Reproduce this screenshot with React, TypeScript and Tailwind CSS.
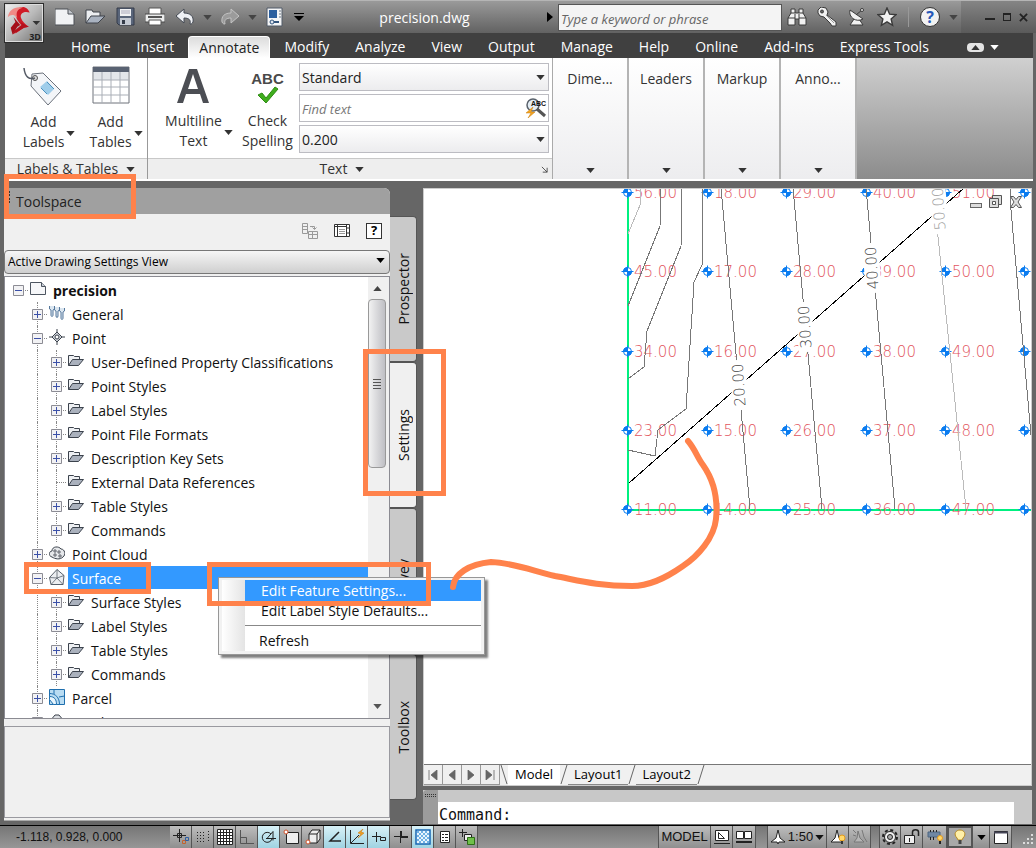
import type { ReactNode } from "react";
import clsx from "clsx";

/* ---------- shared bits ---------- */

function Caret({ className }: { className?: string }) {
  return (
    <svg viewBox="0 0 10 6" className={clsx("h-[5px] w-[9px] shrink-0 fill-current", className)} aria-hidden="true">
      <path d="M0 0h10L5 6z" />
    </svg>
  );
}

interface IconButtonProps {
  label: string;
  className?: string;
  children: ReactNode;
}

function IconButton({ label, className, children }: IconButtonProps) {
  return (
    <button type="button" aria-label={label} className={clsx("flex shrink-0 items-center justify-center", className)}>
      {children}
    </button>
  );
}

/* ---------- title bar ---------- */

const glyph = "h-5 w-5";

function NewIcon() {
  return (
    <svg viewBox="0 0 20 20" className={glyph}>
      <path d="M0 2h13l6 5v11H0z" fill="#f1f2f4" stroke="#4b4f55" />
      <path d="M13 2v5h6" fill="#c4c8ce" stroke="#4b4f55" />
    </svg>
  );
}

function OpenIcon() {
  return (
    <svg viewBox="0 0 20 20" className={glyph}>
      <path d="M1 16V3h6l1 2h7v5" fill="#eceef1" stroke="#3e434b" />
      <path d="M1 16l5-7h14l-7 7z" fill="#a9b2c0" stroke="#3e434b" />
    </svg>
  );
}

function SaveIcon() {
  return (
    <svg viewBox="0 0 20 20" className={glyph}>
      <path d="M2 1h17v17H4l-2-2z" fill="#59657a" stroke="#343b48" />
      <path d="M5 2h11v7H5z" fill="#f0f1f3" />
      <path d="M5 11h11v7H5z" fill="#c5cad3" />
      <path d="M7 13h3v4H7z" fill="#353c49" />
      <path d="M6 4h9M6 6h9" stroke="#aab" />
    </svg>
  );
}

function PrintIcon() {
  return (
    <svg viewBox="0 0 20 20" className={glyph}>
      <path d="M4 1h12v7H4z" fill="#fff" stroke="#555" />
      <path d="M0 7h20v8H0z" fill="#eceded" stroke="#4a4a4a" />
      <path d="M3 9h14v2H3z" fill="#555" />
      <path d="M4 13h12v5H4z" fill="#fff" stroke="#555" />
    </svg>
  );
}

function UndoIcon({ flip }: { flip?: boolean }) {
  return (
    <svg viewBox="0 0 20 20" className={clsx(glyph, flip && "-scale-x-100")}>
      <path
        d="M1 9l8-7v4c6 0 10 3 9 9-1 2-2 2-3 2 1-4-1-6-6-6v5z"
        fill={flip ? "#9b9b9b" : "#eef0f4"}
        stroke={flip ? "#c4c4c4" : "#454b55"}
      />
    </svg>
  );
}

function PlotIcon() {
  return (
    <svg viewBox="0 0 20 20" className={glyph}>
      <path d="M2 1h15v18H2z" fill="#f4f5f6" stroke="#515b68" />
      <path d="M4 3h8v8H4z" fill="#2b5f9e" />
      <path d="M14 4h2M14 7h2M14 10h2" stroke="#6b7683" />
      <path d="M5 15h9" stroke="#33557d" strokeWidth="2" />
      <circle cx="7" cy="15" r="2" fill="#dfe7f0" stroke="#33557d" />
    </svg>
  );
}

function BinocularsIcon() {
  return (
    <svg viewBox="0 0 20 20" className={glyph} fill="#f1f1f1" stroke="#3a3a3a">
      <path d="M4 2h4v4h4V2h4v4l3 5v7h-7v-6H8v6H1v-7l3-5z" />
      <path d="M1 11h7M12 11h7M4 6h4M12 6h4M8 7v5M12 7v5" fill="none" />
    </svg>
  );
}

function KeyIcon() {
  return (
    <svg viewBox="0 0 20 20" className={glyph} fill="#f1f1f1" stroke="#3a3a3a">
      <path d="M1 3l3-3 5 1 2 4-1 3 9 7v4h-4l-2-3-1-1-5-5-4-1-2-3z" />
      <circle cx="5" cy="4.500" r="1.500" fill="#666" />
      <path d="M9 8l8 8" stroke="#999" />
    </svg>
  );
}

function DishIcon() {
  return (
    <svg viewBox="0 0 20 20" className={glyph} fill="#f1f1f1" stroke="#3a3a3a">
      <path d="M7 12l-4 6h13l-4-6" />
      <path d="M3 3c-2 7 6 13 13 9z" />
      <path d="M9 8l6-5" />
      <circle cx="15" cy="3" r="1.500" />
    </svg>
  );
}

function StarIcon() {
  return (
    <svg viewBox="0 0 20 20" className={glyph} fill="#f1f1f1" stroke="#3a3a3a" strokeWidth="1.4">
      <path d="M10 1l2.600 6.200 6.400.5-4.900 4.200 1.500 6.400L10 14.900 4.400 18.300l1.500-6.400L1 7.700l6.400-.5z" />
    </svg>
  );
}

function TitleBar() {
  return (
    <header className="flex h-[33px] items-center border-t border-[#b5b5b5] bg-linear-to-b from-[#9a9a9a] to-[#626262] pl-[50px] text-[#2c2c2c]">
      <IconButton label="New" className="w-[30px]"><NewIcon /></IconButton>
      <IconButton label="Open" className="w-[30px]"><OpenIcon /></IconButton>
      <IconButton label="Save" className="w-[30px]"><SaveIcon /></IconButton>
      <IconButton label="Print" className="w-[30px]"><PrintIcon /></IconButton>
      <IconButton label="Undo" className="w-[30px]"><UndoIcon /></IconButton>
      <IconButton label="Undo history" className="w-[15px] text-[#444]"><Caret className="w-[6px]" /></IconButton>
      <IconButton label="Redo" className="w-[30px]"><UndoIcon flip /></IconButton>
      <IconButton label="Redo history" className="w-[15px] text-[#444]"><Caret className="w-[6px]" /></IconButton>
      <IconButton label="Plot" className="w-[30px]"><PlotIcon /></IconButton>
      <IconButton label="Customize toolbar" className="w-[18px] text-black">
        <svg viewBox="0 0 10 8" className="h-2 w-2.5"><path d="M0 0h10v1H0zM0 3h10L5 8z" /></svg>
      </IconButton>
      <h1 className="flex-1 truncate text-center text-[14px] text-white">precision.dwg</h1>
      <IconButton label="Expand search" className="w-[17px] text-black">
        <svg viewBox="0 0 6 10" className="h-2.5 w-1.5"><path d="M0 0l6 5-6 5z" /></svg>
      </IconButton>
      <input
        type="search"
        aria-label="Search help"
        placeholder="Type a keyword or phrase"
        className="h-[27px] w-56 shrink-0 border border-[#555] bg-[#f4f4f4] px-0.5 pt-1 text-[13px] italic placeholder:text-[#666]"
      />
      <IconButton label="Search" className="w-[30px]"><BinocularsIcon /></IconButton>
      <IconButton label="Subscription" className="w-[30px]"><KeyIcon /></IconButton>
      <IconButton label="Communication" className="w-[30px]"><DishIcon /></IconButton>
      <IconButton label="Favorites" className="w-[30px]"><StarIcon /></IconButton>
      <span className="mx-1.5 h-5 w-px bg-[#999]" />
      <IconButton label="Help" className="w-[30px]">
        <span className="flex h-5 w-5 items-center justify-center rounded-full border border-[#333] bg-[#f2f2f2] text-base font-bold text-[#2758b8]">?</span>
      </IconButton>
      <IconButton label="Help menu" className="w-4 text-[#444]"><Caret className="w-[6px]" /></IconButton>
      <div className="flex h-full items-center bg-linear-to-b from-[#858585] to-[#5a5a5a] pr-1 pl-5">
        <IconButton label="Minimize" className="w-[17px]"><span className="mt-1 h-0.5 w-2.5 bg-[#222]" /></IconButton>
        <IconButton label="Maximize" className="w-[17px]"><span className="h-2 w-2 border border-t-2 border-[#222]" /></IconButton>
        <IconButton label="Close" className="w-[17px]">
          <svg viewBox="0 0 10 10" className="h-[9px] w-[9px] stroke-[#222] stroke-2"><path d="M1 1l8 8M9 1l-8 8" /></svg>
        </IconButton>
      </div>
    </header>
  );
}

function AppButton() {
  return (
    <button
      type="button"
      aria-label="Application menu"
      className="absolute top-[3px] left-1 h-10 w-10 border border-[#2c2c2c] bg-linear-to-br from-[#f0f0f0] via-[#b8b8b8] to-[#6e6e6e] shadow-[inset_0_0_0_1px_#ddd]"
    >
      <svg viewBox="0 0 40 40" className="h-full w-full">
        <path d="M9 14l7 8-3 2-5 8-2-7 5-6z" fill="#a50f19" />
        <path d="M26 9c-6-2-11 1-9 6 1 3 4 6 8 9l-5 1-9 6 2-5 4-4c-5-6-7-10-5-15 2-5 11-6 14 2z" fill="#d01c27" />
        <path d="M3 14C4 6 11 2 19 4c-6 1-8 5-6 11l-3-3c-3-1-5 0-7 2z" fill="#f08a86" />
        <path d="M16 19l9 5-5 1-12 7 2-4 8-6z" fill="#b3111c" />
        <path d="M29 18h8l-4 4z" fill="#333" />
      </svg>
      <span className="absolute right-0.5 bottom-0 text-[9px] leading-[10px] font-bold text-[#222]">3D</span>
    </button>
  );
}

/* ---------- ribbon ---------- */

const RIBBON_TABS = [
  "Home", "Insert", "Annotate", "Modify", "Analyze", "View",
  "Output", "Manage", "Help", "Online", "Add-Ins", "Express Tools",
];

function RibbonTabs() {
  return (
    <nav aria-label="Ribbon" className="mr-[3px] ml-[5px] flex h-[25px] items-end gap-0.5 bg-[#404040] pl-[54px]">
      {RIBBON_TABS.map((tab) => (
        <button
          key={tab}
          type="button"
          className={clsx(
            "h-[22px] shrink-0 text-[14px] leading-[20px]",
            tab === "Annotate"
              ? "rounded-t-sm border border-b-0 border-white bg-linear-to-b from-[#dcdcdc] to-white px-2.5 text-[#222]"
              : "px-3 text-white"
          )}
        >
          {tab}
        </button>
      ))}
      <IconButton label="Minimize ribbon" className="ml-6 h-[22px]">
        <span className="flex h-[9px] w-[17px] items-center justify-center rounded-sm bg-[#e4e4e4] text-[#333]">
          <Caret className="h-1 w-1.5 rotate-180" />
        </span>
      </IconButton>
      <IconButton label="Ribbon options" className="ml-1 h-[22px] text-white"><Caret className="h-1 w-1.5" /></IconButton>
    </nav>
  );
}

interface BigButtonProps {
  icon: ReactNode;
  lines: [string, string];
  menu?: boolean;
  className?: string;
}

function BigButton({ icon, lines, menu, className }: BigButtonProps) {
  return (
    <button type="button" className={clsx("flex shrink-0 items-end justify-center pt-0.5 text-[14px] leading-5", className)}>
      <span className="flex flex-col items-center">
        <span className="flex h-[46px] w-10 items-center justify-center">{icon}</span>
        <span>{lines[0]}</span>
        <span>{lines[1]}</span>
      </span>
      {menu && <Caret className="mb-4 ml-0.5 h-1 w-1.5" />}
    </button>
  );
}

function TagIcon() {
  return (
    <svg viewBox="0 0 40 40" className="mb-1 h-10 w-10">
      <path d="M9 7l11-1 18 18-13 14L8 19z" fill="#f3f5f8" stroke="#6b717b" />
      <path d="M17 20l7-6 7 8-6 6z" fill="#9fcdea" />
      <path d="M18 21l6 6M24 15l7 7" stroke="#4a90bd" />
      <circle cx="12" cy="11" r="2.500" fill="#ddd" stroke="#555" />
      <path d="M1 1c1 9 5 12 11 10" fill="none" stroke="#555b66" strokeWidth="1.500" />
    </svg>
  );
}

function TableIcon() {
  return (
    <svg viewBox="0 0 38 38" className="mb-2 h-[38px] w-[38px]">
      <path d="M1 1h36v36H1z" fill="#fff" stroke="#6e737b" />
      <path d="M1 1h36v5H1z" fill="#596272" />
      <path d="M2 6h34v8H2z" fill="#e3e6ea" />
      <path d="M1 14h36M1 21h36M1 29h36M10 6v31M19 6v31M28 6v31" stroke="#a9aeb6" />
    </svg>
  );
}

function MultilineIcon() {
  return (
    <svg viewBox="0 0 32 36" className="mb-1 h-9 w-8">
      <path d="M0 35L12 1h8l12 34h-6l-3-9H9l-3 9zM11 21h10L16 6z" fill="#4c4e54" />
    </svg>
  );
}

function SpellingIcon() {
  return (
    <span className="flex flex-col items-center">
      <span className="[font-family:'Liberation_Sans',sans-serif] text-[15px] leading-[14px] font-bold text-[#4a4a4a]">ABC</span>
      <svg viewBox="0 0 22 18" className="h-[18px] w-[22px]">
        <path d="M1 9l4-2 4 5L18 1l3 2L9 17z" fill="#3fae1d" stroke="#2f8b14" />
      </svg>
    </span>
  );
}

function FindIcon() {
  return (
    <svg viewBox="0 0 22 20" className="h-5 w-[22px]" fill="none">
      <circle cx="8" cy="7" r="6" stroke="#59616b" strokeWidth="1.500" fill="#e4edf4" />
      <path d="M12 11l8 7" stroke="#555" strokeWidth="3" />
      <path d="M8 9l-7 6h5l-3 5 7-6H6z" fill="#f5a623" stroke="#c97c0c" strokeWidth=".5" />
      <text x="6" y="8" fontSize="7" fontWeight="700" fill="#111" fontFamily="Liberation Sans, sans-serif">ABC</text>
    </svg>
  );
}

function RibbonSelect({ label, value }: { label: string; value: string }) {
  return (
    <div className="relative">
      <select
        aria-label={label}
        defaultValue={value}
        className="h-7 w-full appearance-none border border-[#bcbcc2] bg-linear-to-b from-white to-[#ececee] px-0.5 text-[14px] text-[#222]"
      >
        <option>{value}</option>
      </select>
      <Caret className="pointer-events-none absolute top-3 right-1 text-[#333]" />
    </div>
  );
}

function PanelFooter({ title, children }: { title: string; children?: ReactNode }) {
  return (
    <div className="flex h-[21px] items-center border-t border-[#c8c8c8] bg-[#eee] text-[14px] leading-5">
      <button type="button" className="flex flex-1 items-center justify-center gap-2">
        {title}
        <Caret />
      </button>
      {children}
    </div>
  );
}

function Ribbon() {
  return (
    <section className="mr-[3px] ml-[5px] flex h-[123px] border-b-2 border-white bg-linear-to-b from-[#d0d0d0] to-[#8c8c8c] text-[#333]">
      <div className="flex w-[143px] shrink-0 flex-col border-r border-[#999] bg-white">
        <div className="flex flex-1 items-start pt-1.5 pl-1.5">
          <BigButton icon={<TagIcon />} lines={["Add", "Labels"]} menu className="w-[76px]" />
          <BigButton icon={<TableIcon />} lines={["Add", "Tables"]} menu className="w-[58px]" />
        </div>
        <PanelFooter title="Labels & Tables" />
      </div>

      <div className="flex w-[405px] shrink-0 flex-col border-r border-[#aaa] bg-white">
        <div className="flex flex-1 items-start pt-[5px]">
          <BigButton icon={<MultilineIcon />} lines={["Multiline", "Text"]} menu className="w-[92px] pl-2.5" />
          <BigButton icon={<SpellingIcon />} lines={["Check", "Spelling"]} className="w-[59px] pr-1" />
          <div className="mr-[3px] flex flex-1 flex-col gap-[3px]">
            <RibbonSelect label="Text style" value="Standard" />
            <div className="flex h-7 items-center border border-[#bcbcc2] bg-white">
              <input
                aria-label="Find text"
                placeholder="Find text"
                className="min-w-0 flex-1 px-0.5 pt-1 text-[13px] italic placeholder:text-[#777]"
              />
              <IconButton label="Find" className="w-6"><FindIcon /></IconButton>
            </div>
            <RibbonSelect label="Text height" value="0.200" />
          </div>
        </div>
        <PanelFooter title="Text">
          <IconButton label="Text settings" className="w-4">
            <svg viewBox="0 0 8 8" className="h-[7px] w-[7px] fill-none stroke-[#444]"><path d="M1 1l6 6M7 2v5H2" /></svg>
          </IconButton>
        </PanelFooter>
      </div>

      {["Dime...", "Leaders", "Markup", "Anno..."].map((panel) => (
        <button
          key={panel}
          type="button"
          className="flex w-[76px] shrink-0 flex-col items-center justify-between border-r-2 border-[#b4b4b4] bg-linear-to-b from-white to-[#ededef] pt-[11px] pb-1.5 text-[14px] leading-5"
        >
          {panel}
          <Caret />
        </button>
      ))}
    </section>
  );
}

/* ---------- toolspace ---------- */

type NodeIcon = "drawing" | "general" | "point" | "folder" | "cloud" | "surface" | "parcel" | "grading";

interface TreeRow {
  label: string;
  level: 0 | 1 | 2;
  icon: NodeIcon;
  box: "plus" | "minus" | "none";
  selected?: boolean;
}

const folder = (label: string, box: TreeRow["box"] = "plus"): TreeRow => ({ label, level: 2, icon: "folder", box });

const TREE: TreeRow[] = [
  { label: "precision", level: 0, icon: "drawing", box: "minus" },
  { label: "General", level: 1, icon: "general", box: "plus" },
  { label: "Point", level: 1, icon: "point", box: "minus" },
  folder("User-Defined Property Classifications"),
  folder("Point Styles"),
  folder("Label Styles"),
  folder("Point File Formats"),
  folder("Description Key Sets"),
  folder("External Data References", "none"),
  folder("Table Styles"),
  folder("Commands"),
  { label: "Point Cloud", level: 1, icon: "cloud", box: "plus" },
  { label: "Surface", level: 1, icon: "surface", box: "minus", selected: true },
  folder("Surface Styles"),
  folder("Label Styles"),
  folder("Table Styles"),
  folder("Commands"),
  { label: "Parcel", level: 1, icon: "parcel", box: "plus" },
  { label: "Grading", level: 1, icon: "grading", box: "plus" },
];

const NODE_ICONS: Record<NodeIcon, ReactNode> = {
  drawing: (
    <g fill="#f6f7f9" stroke="#4d5560">
      <path d="M.5 1.500h11l4 4v8h-15z" />
      <path d="M11.500 1.500v4h4" fill="#c9ced6" />
    </g>
  ),
  general: (
    <g fill="#dbe6f0" stroke="#54779b">
      <path d="M.5 1v3l1.500 1v5c0 2 2 2 2 0V5l1.500-1V1" />
      <path d="M5.500 2v3L7 6v5c0 2 2 2 2 0V6l1.500-1V2" />
      <path d="M10.500 3v3l1.500 1v6c0 2 2 2 2 0V7l1.500-1V3" />
    </g>
  ),
  point: (
    <g fill="#fff" stroke="#3c434d">
      <path d="M8 0v16M0 8h16" />
      <path d="M8 3l5 5-5 5-5-5z" fill="#cdd1d7" />
      <circle cx="8" cy="8" r="2" />
    </g>
  ),
  folder: (
    <g stroke="#3c434d">
      <path d="M.5 12.500v-10h5l1 1h5v3" fill="#eef0f3" />
      <path d="M.5 12.500l4-6h11l-5 6z" fill="#aab1bd" />
    </g>
  ),
  cloud: (
    <g fill="#e6e8eb" stroke="#3c434d">
      <path d="M3 12C-1 11 0 6 3 6c0-5 7-5 9-2 4 0 5 6 2 8-3 3-8 2-11 0z" />
      <path d="M5 5h2v2H5zM9 6h2v2H9zM5 9h2v2H5zM10 10h2v2h-2z" fill="#fff" strokeWidth=".8" />
    </g>
  ),
  surface: (
    <g fill="#eceef1" stroke="#59616b">
      <path d="M8 .5l7 6-1 9H2l-1.500-7z" />
      <path d="M8 .5V9l7-2.500M8 9l6 6.500M8 9l-6 6.500M8 9L.5 8.500" fill="none" strokeWidth=".8" />
    </g>
  ),
  parcel: (
    <g stroke="#1f6fae">
      <path d="M.5.5h15v15h-15z" fill="#b9dcf2" />
      <path d="M.5 4.500c6 0 10 4 10 11M5 .5v4.500M10 8l5.500-1" fill="none" />
      <path d="M.5 7.500c5 0 7 3 7 8h-3l-4-5z" fill="#e8f5fd" />
    </g>
  ),
  grading: <path d="M1 8l5-6h4l5 6-7 7z" fill="#dcdfe3" stroke="#3c434d" />,
};

function Expander({ box, first }: { box: TreeRow["box"]; first: boolean }) {
  return (
    <span className="relative flex w-[19px] shrink-0 items-center justify-center">
      {!first && <span className="absolute inset-y-0 left-[9px] border-l border-dotted border-[#888]" />}
      <span className="absolute top-1/2 right-0 left-[9px] border-t border-dotted border-[#888]" />
      {box !== "none" && (
        <svg viewBox="0 0 11 11" className="relative h-[11px] w-[11px]">
          <path d="M.5.500h10v10h-10z" fill="#f2f2f4" stroke="#8c8c94" />
          <path d={box === "plus" ? "M2 5.500h7M5.500 2v7" : "M2 5.500h7"} stroke="#3b50a8" />
        </svg>
      )}
    </span>
  );
}

function TreeItem({ row }: { row: TreeRow }) {
  return (
    <li className="flex h-6 shrink-0 pl-1">
      {row.level > 0 && <span className="w-[19px] shrink-0" />}
      {row.level > 1 && <span className="ml-[9px] w-2.5 shrink-0 border-l border-dotted border-[#888]" />}
      <Expander box={row.box} first={row.level === 0} />
      <svg viewBox="0 0 16 16" className="mt-[3px] ml-0.5 h-4 w-4 shrink-0">
        {NODE_ICONS[row.icon]}
      </svg>
      <span
        className={clsx(
          "ml-[3px] h-[23px] flex-1 pt-px pl-1 text-[14px] leading-[23px] whitespace-nowrap",
          row.selected && "bg-[#3399ff] text-white",
          row.level === 0 && "font-bold"
        )}
      >
        {row.label}
      </span>
    </li>
  );
}

function Scrollbar() {
  return (
    <div className="flex w-[21px] shrink-0 flex-col items-center bg-[#f0f0f0] pr-[3px]">
      <IconButton label="Scroll up" className="h-[22px] w-full text-[#444]"><Caret className="w-2 rotate-180" /></IconButton>
      <div className="flex h-[169px] w-full flex-col items-center justify-center gap-0.5 rounded-sm border border-[#999] bg-linear-to-r from-[#f2f2f2] to-[#bfbfc4]">
        <span className="h-px w-2 bg-[#555]" />
        <span className="h-px w-2 bg-[#555]" />
        <span className="h-px w-2 bg-[#555]" />
        <span className="h-px w-2 bg-[#555]" />
      </div>
      <span className="flex-1" />
      <IconButton label="Scroll down" className="h-6 w-full text-[#555]"><Caret className="w-2" /></IconButton>
    </div>
  );
}

function Toolspace() {
  return (
    <aside aria-label="Toolspace" className="flex w-[386px] shrink-0 flex-col rounded-tr-md border-b border-[#aaa] bg-[#f0f0f0]">
      <div className="flex h-[26px] items-center gap-1.5 rounded-tr-md bg-[#a0a0a0] pl-1">
        <span className="mb-2 h-3 border-l-2 border-dotted border-[#333]" />
        <h2 className="text-[14px] text-[#222]">Toolspace</h2>
      </div>

      <div className="flex h-[34px] items-center justify-end gap-4 pr-2">
        <IconButton label="Copy settings">
          <svg viewBox="0 0 16 16" className="h-4 w-4 fill-none stroke-[#999]">
            <path d="M.5.500h5v10h-5zM.5 3.500h5M.5 6.500h5M6.500 8.500h9v7h-9zM6.500 11.500h9M10.500 8.500v7M8 3.500h4.500V6M10.500 4.500l2 2 2-2" />
          </svg>
        </IconButton>
        <IconButton label="Panorama">
          <svg viewBox="0 0 16 14" className="h-3.5 w-4 fill-[#fff] stroke-[#333]">
            <path d="M.5.500h15v12H.5zM.5 2.500h12M3.500 1v12M12.500 1v12M14 3v2M14 8v2" />
            <path d="M5 5.500h6M5 7.500h6M5 9.500h6" stroke="#999" />
          </svg>
        </IconButton>
        <IconButton label="Toolspace help">
          <span className="flex h-4 w-4 items-center justify-center border border-[#333] bg-white text-[13px] font-bold">?</span>
        </IconButton>
      </div>

      <div className="relative">
        <select
          aria-label="View"
          defaultValue="Active Drawing Settings View"
          className="h-6 w-full appearance-none rounded-sm border border-[#777] bg-linear-to-b from-[#f6f6f6] to-[#cfcfcf] px-[3px] text-[12px] text-black"
        >
          <option>Active Drawing Settings View</option>
        </select>
        <Caret className="pointer-events-none absolute top-[10px] right-[5px] text-black" />
      </div>

      <div className="mt-0.5 flex h-[443px] border border-[#8b8b92] bg-white">
        <ul className="flex min-w-0 flex-1 flex-col overflow-hidden pt-px text-[#111]">
          {TREE.map((row, i) => (
            <TreeItem key={i} row={row} />
          ))}
        </ul>
        <Scrollbar />
      </div>

      <div className="mt-[7px] mb-0.5 flex-1 border border-[#9a9aa0]" />
    </aside>
  );
}

const SIDE_TABS = ["Prospector", "Settings", "Survey", "Toolbox"];

function SideTabs() {
  return (
    <div className="flex w-[27px] shrink-0 flex-col pt-7">
      {SIDE_TABS.map((tab) => (
        <button
          key={tab}
          type="button"
          className={clsx(
            "flex h-[146px] items-center justify-center rounded-r border border-l-0 border-[#555] text-[14px] text-[#111]",
            tab === "Settings" ? "bg-[#f0f0f0]" : "bg-[#c9c9c9]"
          )}
        >
          <span className="rotate-180 [writing-mode:vertical-rl]">{tab}</span>
        </button>
      ))}
    </div>
  );
}

/* ---------- drawing ---------- */

const POINT_X = [627, 707, 786, 866, 945, 1024];
const POINT_Y = [192, 271, 351, 430, 509];
const ELEVATIONS = [
  ["56.00", "18.00", "29.00", "40.00", "51.00"],
  ["45.00", "17.00", "28.00", "39.00", "50.00"],
  ["34.00", "16.00", "27.00", "38.00", "49.00"],
  ["23.00", "15.00", "26.00", "37.00", "48.00"],
  ["11.00", "14.00", "25.00", "36.00", "47.00"],
];

const CONTOURS = [
  "M661 188l-1 38-32 80",
  "M682 188l-1 58-34 85-3 36-16 12",
  "M702 188v77l-8 17-8 127-28 21-3 26-27-6",
  "M721 188L750 509",
  "M793 188L822 509",
  "M866 188L895 509",
  "M1010 188l1 22 20 225",
];

const CONTOUR_LABELS = [
  { text: "20.00", x: 739, y: 385, color: "#444" },
  { text: "30.00", x: 805, y: 327, color: "#444" },
  { text: "40.00", x: 872, y: 268, color: "#444" },
  { text: "50.00", x: 939, y: 209, color: "#999" },
];

function SurveyPoint({ x, y }: { x: number; y: number }) {
  return (
    <g transform={`translate(${x} ${y})`} stroke="#0a7cf0">
      <circle r="4" fill="#fff" />
      <path d="M0 0v-4a4 4 0 0 0-4 4zM0 0v4a4 4 0 0 0 4-4z" fill="#0a7cf0" />
      <path d="M-6 0H6M0-6V6" />
    </g>
  );
}

function DrawingCanvas() {
  return (
    <svg
      viewBox="424 189 608 576"
      className="h-[576px] w-[608px] max-w-none [font-family:'DejaVu_Sans',sans-serif] text-[15px] font-extralight"
      role="img"
      aria-label="Surface contours and survey points"
    >
      <g fill="none" stroke="#00f080" strokeWidth="2">
        <path d="M628 188v322" />
        <path d="M627 510h405" />
      </g>
      {POINT_Y.map((y, r) =>
        POINT_X.map((x, c) => (
          <g key={`${x}-${y}`}>
            <SurveyPoint x={x + 0.5} y={y + 0.5} />
            <text x={x + 7} y={y + 6} fill="#e25560">{ELEVATIONS[r][c]}</text>
          </g>
        ))
      )}
      <g fill="none" stroke="#777" shapeRendering="crispEdges">
        <path d="M640 188v17l-12 29M933 188L966 509" stroke="#bbb" />
        {CONTOURS.map((d) => (
          <path key={d} d={d} />
        ))}
        <path d="M629 483L964 188" stroke="#000" />
      </g>
      {CONTOUR_LABELS.map((l) => (
        <g key={l.text} transform={`translate(${l.x} ${l.y}) rotate(-94)`}>
          <rect x="-25" y="-8" width="50" height="16" fill="#fff" />
          <text textAnchor="middle" y="5" fill={l.color}>{l.text}</text>
        </g>
      ))}
    </svg>
  );
}

function DrawingArea() {
  return (
    <main className="relative min-h-0 flex-1 bg-white">
      <div className="absolute inset-0 overflow-hidden">
        <DrawingCanvas />
      </div>
      <div className="absolute top-1.5 right-2 flex gap-1.5">
        <IconButton label="Minimize drawing" className="h-3.5 w-3.5">
          <span className="mt-1.5 h-[5px] w-3 border border-[#666] bg-[#ddd]" />
        </IconButton>
        <IconButton label="Restore drawing" className="h-3.5 w-3.5">
          <svg viewBox="0 0 14 14" className="h-3.5 w-3.5 fill-[#ddd] stroke-[#555]">
            <path d="M3.500.500h9v9h-9z" /><path d="M.5 3.500h9v9h-9z" /><path d="M3.500 6.500h3v3h-3z" fill="#fff" />
          </svg>
        </IconButton>
        <IconButton label="Close drawing" className="h-3.5 w-3.5">
          <svg viewBox="0 0 14 14" className="h-3.5 w-3.5 fill-[#ddd] stroke-[#555]">
            <path d="M1.500 1.500h3l2.500 3 2.500-3h3L9 7l3.500 5.500h-3L7 9.500l-2.500 3h-3L5 7z" />
          </svg>
        </IconButton>
      </div>
    </main>
  );
}

const NAV_PATHS = [
  { label: "First layout", d: "M1 0v10M9 0L3 5l6 5z" },
  { label: "Previous layout", d: "M8 0L2 5l6 5z" },
  { label: "Next layout", d: "M2 0l6 5-6 5z" },
  { label: "Last layout", d: "M9 0v10M1 0l6 5-6 5z" },
];

function Slash({ flip }: { flip?: boolean }) {
  return (
    <svg viewBox="0 0 8 20" className={clsx("h-5 w-2 shrink-0 stroke-[#666]", flip && "-scale-x-100")}>
      <path d="M7 0L1 19" />
    </svg>
  );
}

function LayoutTabs() {
  return (
    <div className="flex h-[21px] items-stretch border-t border-[#777] bg-[#f0f0f0] text-[13px] text-black">
      {NAV_PATHS.map((n) => (
        <IconButton key={n.label} label={n.label} className="w-[19px] border-r border-b border-[#999]">
          <svg viewBox="0 0 10 10" className="h-2.5 w-2.5 fill-[#666] stroke-[#666]"><path d={n.d} strokeWidth=".8" /></svg>
        </IconButton>
      ))}
      <Slash flip />
      <button type="button" className="bg-white px-[7px]">Model</button>
      {["Layout1", "Layout2"].map((t) => (
        <span key={t} className="flex">
          <Slash />
          <button type="button" className="border-b border-[#888] px-1.5">{t}</button>
        </span>
      ))}
      <Slash />
    </div>
  );
}

function CommandLine() {
  return (
    <div className="mt-1 flex h-[34px] bg-[#c8c8c8]">
      <div className="w-[15px] shrink-0 rounded-tl bg-[#9c9c9c] px-0.5 pt-1">
        <svg viewBox="0 0 11 4" className="h-1 w-[11px] stroke-[#333]">
          <path d="M0 .5h11M0 2.500h11" strokeDasharray="1 1" />
        </svg>
      </div>
      <label className="mt-3 mr-[18px] flex flex-1 items-center bg-white pt-1 pl-px [font-family:'DejaVu_Sans_Mono',monospace] text-[15px] leading-4 text-[#111]">
        Command:
        <input className="min-w-0 flex-1 outline-none" />
      </label>
    </div>
  );
}

/* ---------- status bar ---------- */

const TOGGLES: { label: string; on?: boolean; icon: ReactNode }[] = [
  { label: "Infer constraints", icon: <><path d="M6.500 0v13M0 6.500h13M4.500 4.500h4v4h-4z" /><path d="M9.500 11.500h3v3h-3z" stroke="#c4622d" /><path d="M12.500 8.500h3v3h-3z" stroke="#2d5fa4" /></> },
  { label: "Snap", icon: <path d="M2 3.500h9M2 6.500h9M2 9.500h9M2 12.500h9M13.500 2v11" strokeDasharray="1 2" /> },
  { label: "Grid", icon: <path d="M.5.500h15v15H.5zM3.500.500v15M6.500.500v15M9.500.500v15M12.500.500v15M.5 3.500h15M.5 6.500h15M.5 9.500h15M.5 12.500h15" fill="#fff" /> },
  { label: "Ortho", icon: <path d="M1.500 1v13.500H15M1.500 8.500h6v6" stroke="#555" /> },
  { label: "Polar", on: true, icon: <path d="M11 10a5 5 0 1 1-1-5M5 9.500h10M6 9.500l6-7v9" /> },
  { label: "Object snap", icon: <><path d="M3.500 3.500h12v11h-12z" fill="#eee" /><circle cx="3" cy="3" r="2" stroke="#d2522a" fill="#fff" /></> },
  { label: "3D object snap", icon: <><path d="M4 5l3-4h8v9l-3 4H4zM4 5h8v9M12 5l3-4" fill="#eee" /><circle cx="3" cy="13" r="2" stroke="#d2522a" fill="#fff" /></> },
  { label: "Object snap tracking", on: true, icon: <path d="M12 3L3 12h11" strokeWidth="1.500" /> },
  { label: "Dynamic UCS", on: true, icon: <><path d="M1.500 1v13.500H15M2 14l8-8" /><path d="M14 0l-5 4 3 1-3 4 6-5-3-1z" fill="#f0a020" stroke="#c87408" strokeWidth=".5" /></> },
  { label: "Dynamic input", on: true, icon: <path d="M5.500 3v10M1 7.500h9M9.500 8.500h5v3h-5z" /> },
  { label: "Lineweight", icon: <><path d="M7.500 2v12M1 7.500h6" /><path d="M8 8h7M8 2v6" strokeWidth="2" /></> },
  { label: "Transparency", on: true, icon: <><path d="M1 1h14v14H1z" fill="#e9f5fd" stroke="#1767b3" strokeWidth="1.500" /><path d="M2 3h12M2 7h12M2 11h12" stroke="#6fb2e4" strokeWidth="2" strokeDasharray="2 2" /><path d="M4 5h10M4 9h10M4 13h10" stroke="#6fb2e4" strokeWidth="2" strokeDasharray="2 2" /></> },
  { label: "Quick properties", icon: <path d="M3.500 2.500h9v11h-9zM5 5.500h2M8 5.500h3M5 8.500h2M8 8.500h3M5 11.500h2M8 11.500h3" fill="#fff" /> },
  { label: "Selection cycling", icon: <><path d="M3.500 0v8M0 3.500h8" /><path d="M5.500 5.500h7v6h-7z" fill="#eee" /><path d="M8.500 8.500h7v7h-7z" fill="#6fc04a" stroke="#2e6f17" /></> },
];

function StatusIcon({ children }: { children: ReactNode }) {
  return <svg viewBox="0 0 16 16" className="h-4 w-4 shrink-0 fill-none stroke-[#222]">{children}</svg>;
}

const cell = "h-full border-r border-[#555] bg-linear-to-b from-[#bdbdbd] to-[#8f8f8f]";

function StatusBar() {
  return (
    <footer className="flex h-[23px] items-stretch border-t border-black bg-linear-to-b from-[#767676] to-[#979797] pl-1 [font-family:'Liberation_Sans',sans-serif] text-[#111]">
      <output className="w-[166px] shrink-0 pl-3 text-[12px] leading-[22px]">-1.118, 0.928, 0.000</output>
      {TOGGLES.map((t) => (
        <IconButton
          key={t.label}
          label={t.label}
          className={clsx(
            "w-[22px] border-r border-[#555] bg-linear-to-b",
            t.on ? "from-[#d8f1f7] to-[#9fd3e2]" : "from-[#bdbdbd] to-[#8f8f8f]"
          )}
        >
          <StatusIcon>{t.icon}</StatusIcon>
        </IconButton>
      ))}
      <span className="flex-1" />
      <button type="button" className={clsx(cell, "w-[53px] border-l text-[13px] leading-[22px]")}>MODEL</button>
      <IconButton label="Model view" className={clsx(cell, "w-[22px]")}>
        <StatusIcon><path d="M1.500 1.500h13v10h-13z" fill="#fff" /><path d="M4.500 3.500v6h6zM0 14.500h16" /></StatusIcon>
      </IconButton>
      <IconButton label="Quick view" className={clsx(cell, "w-[23px]")}>
        <StatusIcon><path d="M.5 2.500h7v7h-7zM8.500 2.500h7v7h-7z" fill="#fff" /><path d="M0 13h16" strokeWidth="2" /></StatusIcon>
      </IconButton>
      <span className="w-[11px]" />
      <button type="button" className={clsx(cell, "flex w-[60px] items-center justify-center gap-0.5 border-l text-[13px]")}>
        <StatusIcon><path d="M8 1l2 8 5 4H9l-1 2-1-2H1l5-4z" fill="#fff" /></StatusIcon>
        1:50
        <Caret className="w-2" />
      </button>
      <IconButton label="Annotation visibility" className={clsx(cell, "w-[22px]")}>
        <StatusIcon><path d="M7 1l2 8 4 4H1l4-4z" fill="#fff" /><circle cx="12" cy="9" r="3" fill="#ffd86b" stroke="#e39a1c" /><path d="M12 12v3" stroke="#333" strokeWidth="2" /></StatusIcon>
      </IconButton>
      <IconButton label="Auto scale" className={clsx(cell, "w-[22px]")}>
        <StatusIcon><path d="M6 2l2 7 4 4H2l3-4zM10 1l2 7 3 5M1 1l3 3M1 6l3 1" stroke="#777" fill="#b5b5b5" /></StatusIcon>
      </IconButton>
      <span className="w-2" />
      <IconButton label="Workspace" className={clsx(cell, "w-[22px] border-l")}>
        <StatusIcon><circle cx="8" cy="8" r="7" strokeWidth="2" strokeDasharray="3 2.500" /><circle cx="8" cy="8" r="5.500" fill="#eee" /><circle cx="8" cy="8" r="2.500" fill="#aaa" /></StatusIcon>
      </IconButton>
      <IconButton label="Toolbar lock" className={clsx(cell, "w-[22px]")}>
        <StatusIcon><path d="M8.500 7V3c0-3 6-3 6 0v4" strokeWidth="1.500" /><path d="M.5 6.500h10v8H.5zM5.500 9v4" fill="#eee" /></StatusIcon>
      </IconButton>
      <IconButton label="Hardware acceleration" className={clsx(cell, "w-6")}>
        <StatusIcon><path d="M1 3h12v5H1z" fill="#6f87a3" stroke="#4c6480" /><path d="M3.500 1v2M6.500 1v2M9.500 1v2M3.500 8v3M6.500 8v3" /><circle cx="13" cy="9" r="2.500" fill="#ffd86b" stroke="#e39a1c" /><path d="M13 12v3" strokeWidth="2" /></StatusIcon>
      </IconButton>
      <IconButton label="Isolate objects" className="w-[26px] border-2 border-[#555] bg-[#a8a8a8]">
        <StatusIcon><path d="M5 9C1 5 4 1 8 1s7 4 3 8l-1 2H6z" fill="#fff0a8" stroke="#b98c24" /><path d="M8 11v4" strokeWidth="3" stroke="#444" /></StatusIcon>
      </IconButton>
      <IconButton label="Status menu" className={clsx(cell, "w-[17px] text-black")}><Caret className="w-1.5" /></IconButton>
      <IconButton label="Clean screen" className={clsx(cell, "w-[22px]")}>
        <StatusIcon><path d="M1.500 2.500h13v12h-13z" fill="#fff" /><path d="M1 3.500h14" strokeWidth="2" stroke="#445" /></StatusIcon>
      </IconButton>
      <span className="flex w-6 items-end justify-end p-0.5">
        <svg viewBox="0 0 12 12" className="h-3 w-3 fill-[#ddd]"><path d="M9 0h2v2H9zM9 4h2v2H9zM9 8h2v2H9zM5 4h2v2H5zM5 8h2v2H5zM1 8h2v2H1z" /></svg>
      </span>
    </footer>
  );
}

/* ---------- overlays ---------- */

function ContextMenu() {
  return (
    <div
      role="menu"
      className="absolute top-[577px] left-[218px] flex w-[267px] border border-[#979797] bg-[#f2f2f2] px-[3px] pt-0.5 pb-[3px] text-[14px] leading-5 text-[#111] shadow-[3px_3px_2px_#00000080]"
    >
      <div className="w-[23px] shrink-0 bg-linear-to-r from-white to-[#e4e4e4]" />
      <div className="flex-1 bg-white">
        <button type="button" role="menuitem" className="block w-full bg-[#3399ff] pt-px pl-4 text-left text-white">
          Edit Feature Settings...
        </button>
        <button type="button" role="menuitem" className="block w-full pl-4 text-left">Edit Label Style Defaults...</button>
        <div className="my-1 border-t border-[#888]" />
        <button type="button" role="menuitem" className="block w-full pl-3.5 text-left leading-[21px]">Refresh</button>
      </div>
    </div>
  );
}

function Markup() {
  const box = "absolute border-[5px] border-[#ff824b]";
  return (
    <div className="pointer-events-none absolute inset-0 overflow-hidden">
      <div className={clsx(box, "top-[174px] left-1 h-[45px] w-[132px]")} />
      <div className={clsx(box, "top-[349px] left-[363px] h-[147px] w-[83px]")} />
      <div className={clsx(box, "top-[562px] left-6 h-8 w-[127px]")} />
      <div className={clsx(box, "top-[562px] left-[207px] h-11 w-56")} />
      <svg viewBox="0 0 280 160" className="absolute top-[435px] left-[445px] h-40 w-[280px]">
        <path
          d="M243 6C250 14 252 22 258 30C270 47 273 64 271 84C269 103 253 121 238 131C218 145 203 151 187 151C152 151 132 145 110 141C88 136 70 128 46 127C24 129 9 139 8 152"
          fill="none"
          stroke="#ff824b"
          strokeWidth="6"
          strokeLinecap="round"
        />
      </svg>
    </div>
  );
}

export default function App() {
  return (
    <div className="relative flex min-h-screen flex-col bg-[#666] [font-family:'Open_Sans','Noto_Sans',sans-serif]">
      <TitleBar />
      <RibbonTabs />
      <Ribbon />
      <div className="mt-[7px] mb-px flex flex-1 pl-1">
        <div className="flex pb-[3px]">
          <Toolspace />
          <SideTabs />
        </div>
        <div className="mr-1 ml-1.5 flex min-w-0 flex-1 flex-col">
          <div className="flex min-h-0 flex-1 flex-col border border-[#ccc]">
            <DrawingArea />
            <LayoutTabs />
          </div>
          <CommandLine />
        </div>
      </div>
      <StatusBar />
      <AppButton />
      <ContextMenu />
      <Markup />
    </div>
  );
}
